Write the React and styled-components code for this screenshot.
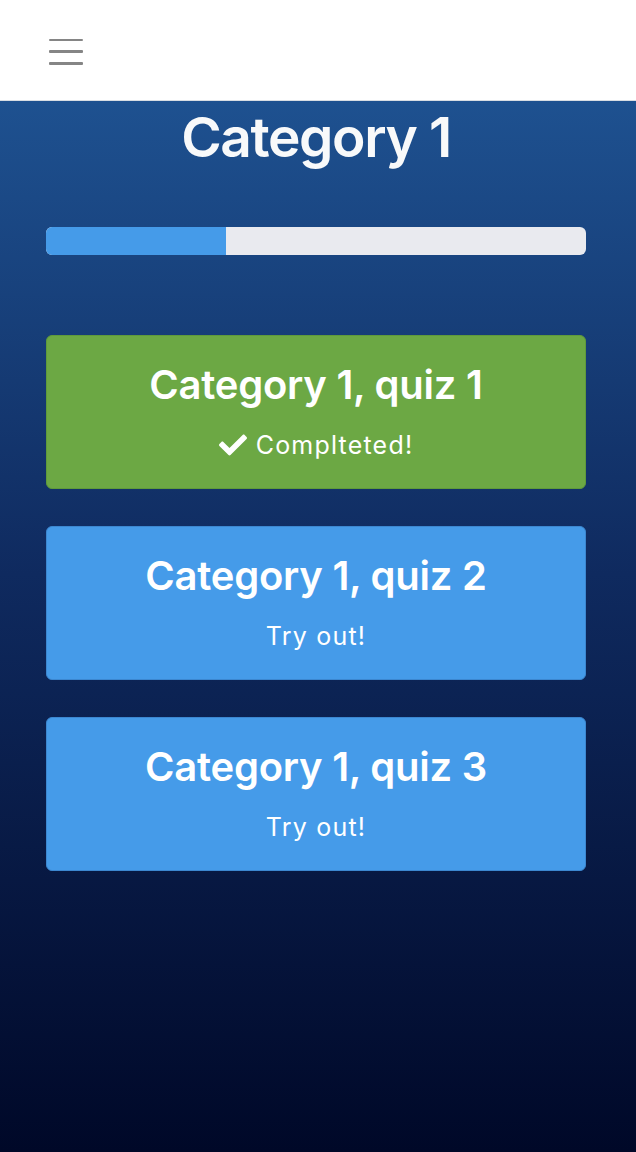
import React from "react";
import styled, { createGlobalStyle } from "styled-components";

const Global = createGlobalStyle`
  html, body { margin: 0; padding: 0; }
  body {
    font-family: Inter, "Noto Sans", "Liberation Sans", sans-serif;
    background: #000828;
  }
  * { box-sizing: border-box; }
`;

const Page = styled.div`
  min-height: 1152px;
  display: flex;
  flex-direction: column;
`;

const NavBar = styled.header`
  height: 101px;
  background: #ffffff;
  border-bottom: 1px solid #d9dde3;
  display: flex;
  align-items: center;
  padding: 0 49px;
`;

const Toggler = styled.button`
  width: 34px;
  height: 26px;
  padding: 0;
  border: none;
  background: transparent;
  display: flex;
  flex-direction: column;
  justify-content: space-between;
  margin-top: 3px;
`;

const Bar = styled.span`
  display: block;
  height: 2.5px;
  border-radius: 1px;
  background: #858585;
`;

const Main = styled.main`
  flex: 1;
  background: linear-gradient(to bottom, #1e5190 0%, #0f2a5f 45%, #000828 100%);
  padding: 0 50px 40px 46px;
  display: flex;
  flex-direction: column;
`;

const Title = styled.h1`
  margin: 0;
  text-align: center;
  color: #f8f9fa;
  font-size: 55px;
  font-weight: 600;
  line-height: 72px;
  letter-spacing: -1.4px;
`;

const Progress = styled.div`
  margin-top: 54px;
  height: 28px;
  background: #e9eaef;
  border-radius: 6px;
  overflow: hidden;
  display: flex;
`;

const ProgressFill = styled.div`
  background: #459be9;
  height: 100%;
`;

const Cards = styled.div`
  margin-top: 80px;
  display: flex;
  flex-direction: column;
  gap: 37px;
`;

const Card = styled.a`
  display: flex;
  flex-direction: column;
  align-items: center;
  height: 154px;
  padding-top: 24px;
  border-radius: 6px;
  border: 1.5px solid ${(p) => (p.$done ? "#5f9a3b" : "#3c87d0")};
  background: ${(p) => (p.$done ? "#6ca844" : "#459be9")};
  color: #ffffff;
  text-decoration: none;
`;

const CardTitle = styled.h3`
  margin: 0;
  font-size: 40px;
  font-weight: 600;
  line-height: 50px;
  letter-spacing: -0.25px;
`;

const CardSub = styled.p`
  margin: 17px 0 0;
  font-size: 25px;
  font-weight: 400;
  line-height: 36px;
  letter-spacing: 1.2px;
  display: flex;
  align-items: center;
  gap: 9px;
`;

const Check = () => (
  <svg width="28" height="22" viewBox="0 0 512 400" fill="#ffffff">
    <path d="M173.898 383.404l-166.4-166.4c-9.997-9.997-9.997-26.206 0-36.204l36.203-36.204c9.997-9.998 26.207-9.998 36.204 0L192 256.69 432.095 16.596c9.997-9.997 26.207-9.997 36.204 0l36.203 36.204c9.997 9.997 9.997 26.206 0 36.204l-294.4 294.401c-9.998 9.997-26.207 9.997-36.204-.001z" />
  </svg>
);

const quizzes = [
  { title: "Category 1, quiz 1", done: true },
  { title: "Category 1, quiz 2", done: false },
  { title: "Category 1, quiz 3", done: false },
];

export default function App() {
  return (
    <>
      <Global />
      <Page>
        <NavBar>
          <Toggler aria-label="menu">
            <Bar />
            <Bar />
            <Bar />
          </Toggler>
        </NavBar>
        <Main>
          <Title>Category 1</Title>
          <Progress>
            <ProgressFill style={{ width: "33.33%" }} />
          </Progress>
          <Cards>
            {quizzes.map((q) => (
              <Card key={q.title} href="#" $done={q.done}>
                <CardTitle>{q.title}</CardTitle>
                <CardSub>
                  {q.done ? (
                    <>
                      <Check />
                      Complteted!
                    </>
                  ) : (
                    "Try out!"
                  )}
                </CardSub>
              </Card>
            ))}
          </Cards>
        </Main>
      </Page>
    </>
  );
}
